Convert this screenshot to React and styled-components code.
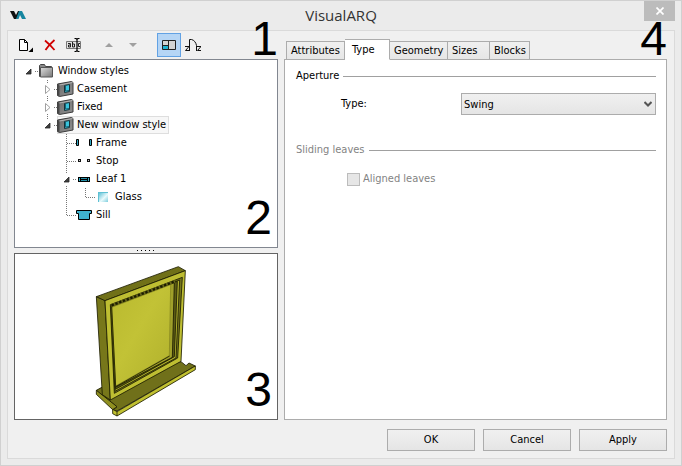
import React, { useState } from "react";
import styled, { createGlobalStyle, css } from "styled-components";

const GlobalStyle = createGlobalStyle`
  * { box-sizing: border-box; }
  body { margin: 0; }
  body, button, select, input {
    font-family: "DejaVu Sans Condensed", "Noto Sans", sans-serif;
    font-size: 11px;
    line-height: 16px;
    color: #000;
  }
`;

const Window = styled.div`
  display: flex;
  flex-direction: column;
  min-height: 100vh;
  padding: 0 6px 6px;
  border: 1px solid #d0d0d0;
  background: #ebebeb;
`;

const TitleBar = styled.header`
  display: grid;
  grid-template-columns: 32px 1fr 32px;
  height: 29px;
`;

const Logo = styled.svg`
  width: 16px;
  height: 8px;
  margin: 10px 0 0 3px;
`;

const Title = styled.h1`
  margin: 0;
  font-family: "Open Sans", sans-serif;
  font-size: 15px;
  font-weight: 400;
  line-height: 29px;
  text-align: center;
  color: #333;
`;

const CloseButton = styled.button`
  display: grid;
  place-items: center;
  width: 31px;
  height: 20px;
  margin-left: 1px;
  padding: 0;
  border: 0;
  background: #bcbcbc;
`;

const Client = styled.main`
  flex: 1;
  display: flex;
  flex-direction: column;
  padding: 0 7px 7px 6px;
  border: 1px solid #dadada;
  background: #f0f0f0;
`;

const Columns = styled.div`
  flex: 1;
  display: grid;
  grid-template-columns: 264px minmax(0, 1fr);
  gap: 6px;
`;

const Column = styled.section`
  position: relative;
  display: flex;
  flex-direction: column;
`;

const Toolbar = styled.div`
  display: flex;
  align-items: center;
  height: 28px;
`;

const ToolButton = styled.button`
  display: grid;
  place-items: center;
  width: 24px;
  height: 24px;
  padding: 0;
  border: 1px solid ${(p) => (p.$pressed ? "#62a2e4" : "transparent")};
  background: ${(p) => (p.$pressed ? "#b5d5f5" : "transparent")};
`;

const ToolGap = styled.span`
  width: ${(p) => p.$size}px;
`;

const Tree = styled.ul`
  position: relative;
  height: 189px;
  margin: 0;
  padding: 2px 4px;
  border: 1px solid #828790;
  background: #fff;
  list-style: none;
`;

const TreeRow = styled.li`
  display: flex;
  align-items: center;
  height: 18px;
`;

const Guide = styled.svg`
  flex: none;
  width: 19px;
  height: 18px;
`;

const ItemIcon = styled.svg`
  flex: none;
  width: 16px;
  height: 16px;
  overflow: visible;
`;

const ItemLabel = styled.span`
  height: 18px;
  margin-left: 1px;
  padding: 0 3px;
  line-height: 18px;
  white-space: nowrap;
`;

const Item = styled.span`
  display: flex;
  align-items: center;
  height: 18px;
  ${(p) =>
    p.$selected &&
    css`
      background: #f7f7f7;
      box-shadow: inset 0 0 0 1px #dedede;
    `}
`;

const Splitter = styled.div`
  display: flex;
  justify-content: center;
  height: 5px;
  padding-top: 2px;
`;

const Preview = styled.div`
  position: relative;
  flex: 1;
  padding-left: 70px;
  border: 1px solid #646464;
  background: #fff;
`;

const Model = styled.svg`
  display: block;
  width: 120px;
  height: 165px;
`;

const Callout = styled.span`
  position: absolute;
  font-family: "Liberation Sans", Arial, sans-serif;
  font-size: 48px;
  line-height: 34px;
  pointer-events: none;
  ${(p) => (p.$low ? "bottom: 12px; right: 5px;" : "top: -9px; right: 0;")}
`;

const Tabs = styled.div`
  display: flex;
  align-items: flex-end;
  height: 28px;
  padding-left: 2px;
`;

const Tab = styled.button`
  width: ${(p) => p.$width}px;
  height: 19px;
  margin-bottom: -1px;
  padding: 0 0 0 4px;
  border: 1px solid #acacac;
  border-left-width: ${(p) => (p.$first ? 1 : 0)}px;
  background: linear-gradient(#f0f0f0, #e6e6e6);
  line-height: 18px;
  text-align: left;
  ${(p) =>
    p.$active &&
    css`
      z-index: 1;
      height: 21px;
      padding: 0 0 0 7px;
      border-bottom-color: #fff;
      background: #fff;
    `}
`;

const TabPanel = styled.div`
  flex: 1;
  padding: 8px 10px 8px 11px;
  border: 1px solid #acacac;
  background: #fff;
`;

const Group = styled.fieldset`
  min-width: 0;
  margin: 0 0 27px;
  padding: 0;
  border: 0;
  color: ${(p) => (p.disabled ? "#838383" : "#000")};
`;

const Legend = styled.legend`
  display: flex;
  align-items: center;
  gap: 4px;
  width: 100%;
  padding: 0;

  &::after {
    content: "";
    flex: 1;
    border-top: 1px solid #a0a0a0;
  }
`;

const Field = styled.div`
  display: grid;
  grid-template-columns: 120px minmax(0, 1fr);
  align-items: center;
  margin: 9px 0 0 45px;
`;

const SelectBox = styled.div`
  display: grid;
  align-items: center;

  & > * { grid-area: 1 / 1; }
  & > svg { justify-self: end; margin-right: 4px; pointer-events: none; }
`;

const Select = styled.select`
  appearance: none;
  width: 100%;
  height: 22px;
  padding: 2px 16px 0 2px;
  border: 1px solid #acacac;
  border-radius: 0;
  background: linear-gradient(#f0f0f0, #e5e5e5);
`;

const CheckLabel = styled.label`
  display: flex;
  align-items: center;
  gap: 3px;
  margin: 13px 0 0 51px;
`;

const CheckBox = styled.input`
  appearance: none;
  width: 13px;
  height: 13px;
  margin: 0;
  border: 1px solid #bcbcbc;
  background: #e6e6e6;
  &:checked { background: #999; }
`;

const Footer = styled.footer`
  display: flex;
  justify-content: flex-end;
  gap: 8px;
  padding-top: 9px;
`;

const PushButton = styled.button`
  width: 88px;
  height: 22px;
  padding: 0;
  border: 1px solid #acacac;
  background: linear-gradient(#f0f0f0, #e5e5e5);
`;

function NewIcon() {
  return (
    <svg width="16" height="16" viewBox="0 0 16 16" aria-hidden="true">
      <path d="M1.500 2.500h5l3 3v8h-8z" fill="#fff" stroke="#000" />
      <path d="M6.500 2.500v3h3" fill="none" stroke="#000" />
      <path d="M15 10.500v4.500h-4.500z" />
    </svg>
  );
}

function DeleteIcon() {
  return (
    <svg width="12" height="12" viewBox="0 0 12 12" aria-hidden="true">
      <path d="M1 1.500C4 4 8 8 10.500 11M10.500 1C7 4 4 7 1.500 11" fill="none" stroke="#d00000" strokeWidth="1.800" />
    </svg>
  );
}

function RenameIcon() {
  return (
    <svg width="16" height="16" viewBox="0 0 16 16" aria-hidden="true">
      <path d="M.5 4.500h14v7H.5z" fill="#e4e4e4" stroke="#777" />
      <path d="M2 6.500h2.500v3.500h-2v-2h2M6.500 5v5h2v-3h-2M14 6.500h-1.500v3H14" fill="none" stroke="#222" />
      <path d="M8.500 1.500h1.500l1 1 1-1h1.500M11 2v12M8.500 14.500h1.500l1-1 1 1h1.500" fill="none" stroke="#000" strokeWidth="1.200" />
    </svg>
  );
}

function TriangleIcon({ down }) {
  return (
    <svg width="8" height="4" viewBox="0 0 8 4" aria-hidden="true">
      <path d={down ? "M0 0h8L4 4z" : "M0 4h8L4 0z"} fill="#a0a0a0" />
    </svg>
  );
}

function PlanIcon() {
  return (
    <svg width="14" height="12" viewBox="0 0 14 12" aria-hidden="true">
      <path d="M.5 1.500h13v9H.5z" fill="#d4d4d4" />
      <path d="M1 6h6v4H1z" fill="#1fb4d4" />
      <path d="M.5 1.500h13v9H.5zM6.500 1v9M1 6.500h6" fill="none" stroke="#222" />
    </svg>
  );
}

function SectionIcon() {
  return (
    <svg width="16" height="14" viewBox="0 0 16 14" aria-hidden="true">
      <path d="M4.500 13V1.500h2C9 2 11 4.500 11.500 7.500V13M0 8.500h4L.5 12.500h4M12 8.500h4L12.500 12.500H16" fill="none" stroke="#111" />
    </svg>
  );
}

const shapes = {
  folder: (
    <>
      <path d="M1.500 13.500v-11l1-1h4l1 2h6v10z" fill="#888" stroke="#444" />
      <path d="M2.500 4.500h12v9.500h-12z" fill="url(#folder)" stroke="#555" />
    </>
  ),
  wall: (
    <>
      <path d="M.5 3L14.500.500l1.500 1v11.500L2.500 15.500l-2-1z" fill="url(#wall)" stroke="#3c3c3c" />
      <path d="M.5 3l2 1v11.500l-2-1z" fill="#484848" />
      <path d="M2.500 4l13-2.500" stroke="#b4b4b4" />
      <path d="M7.500 4.500l5-1v7l-5 1z" fill="#3bc4dc" stroke="#18333a" />
      <path d="M8.500 4.500v5.500l3.500-.5" fill="none" stroke="#176476" />
    </>
  ),
  frame: <path d="M.5 4.500h2v6h-2zM13.500 4.500h2v6h-2z" fill="#2fa9c4" stroke="#000" />,
  stop: (
    <>
      <path d="M2 6h3v3H2zM11 6h3v3h-3z" fill="#111" />
      <path d="M3 7h1v1H3zM12 7h1v1h-1z" fill="#ccc" />
    </>
  ),
  leaf: (
    <>
      <path d="M2 6h12v5H2z" fill="#000" />
      <path d="M3 7h1v3H3zM12 7h1v3h-1z" fill="#35b0ca" />
      <path d="M5 7.500h6M5 9.500h6" stroke="#2491a8" />
    </>
  ),
  glass: (
    <>
      <path d="M3 3h10v10H3z" fill="url(#glass)" />
      <path d="M3.500 13V3.500H13" fill="none" stroke="#5fc1d4" />
    </>
  ),
  sill: <path d="M.5 3.500h15v3h-2v6h-11v-6h-2z" fill="#3fb3cf" stroke="#000" />,
};

/* Guide cells: "open"/"closed" are expanders, "tee"/"end" join a leaf, "line" passes through. */
const rows = [
  { label: "Window styles", icon: "folder", guides: ["openRoot"] },
  { label: "Casement", icon: "wall", guides: ["", "closed"] },
  { label: "Fixed", icon: "wall", guides: ["", "closed"] },
  { label: "New window style", icon: "wall", guides: ["", "open"], selected: true },
  { label: "Frame", icon: "frame", guides: ["", "", "tee"] },
  { label: "Stop", icon: "stop", guides: ["", "", "tee"] },
  { label: "Leaf 1", icon: "leaf", guides: ["", "", "openMid"] },
  { label: "Glass", icon: "glass", guides: ["", "", "line", "end"] },
  { label: "Sill", icon: "sill", guides: ["", "", "end"] },
];

function GuideCell({ kind }) {
  const line = {
    openRoot: "M16 9.500h3",
    closed: "M9.500 0v3M9.500 16v2M16 9.500h3",
    open: "M9.500 0v3M16 9.500h3",
    openMid: "M9.500 0v3M9.500 16v2M16 9.500h3",
    tee: "M9.500 0v18M10 9.500h9",
    end: "M9.500 0v10M10 9.500h9",
    line: "M9.500 0v18",
  }[kind];
  return (
    <Guide viewBox="0 0 19 18" aria-hidden="true">
      {line && <path d={line} fill="none" stroke="#777" strokeDasharray="1 1" />}
      {kind.startsWith("open") && <path d="M12 7v5H7z" fill="#404040" stroke="#262626" strokeWidth=".8" />}
      {kind === "closed" && <path d="M7.500 5.500v8l4.500-4z" fill="#fff" stroke="#a0a0a0" />}
    </Guide>
  );
}

function WindowModel() {
  return (
    <Model viewBox="0 12 360 495" role="img" aria-label="Window preview">
      <defs>
        <linearGradient id="pane" x1="0" y1="0" x2="1" y2="1">
          <stop offset="0" stopColor="#b9b92e" />
          <stop offset=".45" stopColor="#c2c236" />
          <stop offset="1" stopColor="#b0b02c" />
        </linearGradient>
      </defs>
      <g stroke="#1c1c00" strokeWidth="2.500" strokeLinejoin="round">
        <path d="M34 421l22-12 232-74 15 12 9-8 19 9-235 135-13-4 13-8z" fill="#70701a" />
        <path d="M34 421v12l49 46 13-9z" fill="#8f8f20" />
        <path d="M83 478l13 7 235-137v11L96 498l-13-7z" fill="#c0c030" />
        <path d="M96 485v13" />
        <path d="M34 140l26 12 16 298-24-16z" fill="#77771a" />
        <path d="M34 140L280 50l21 12L60 152z" fill="#707018" />
        <path d="M60 152L301 62l-13 272L76 450z" fill="#bebe32" />
        <path d="M76 164L292 82l-14 242L88 430z" fill="#74741c" />
        <path d="M78 168L284 90l-11 234L90 424z" fill="#b0b02c" />
        <path d="M80 172L277 94l-9 226L91 418z" fill="#5a5a14" />
        <path d="M80 172L268 98l-6 224L91 412z" fill="#a0a02a" />
        <path d="M80 172L257 104l-4 213L92 408z" fill="url(#pane)" stroke="#8a8a20" />
        <path d="M80 170l12 240 162-92" fill="none" />
        <path d="M80 166L270 94" stroke="#66661a" strokeWidth="8" />
        <path d="M80 166L270 94" strokeWidth="7" strokeDasharray="7 5" />
      </g>
    </Model>
  );
}

const tabs = [
  { name: "Attributes", width: 59 },
  { name: "Type", width: 45 },
  { name: "Geometry", width: 58 },
  { name: "Sizes", width: 42 },
  { name: "Blocks", width: 40 },
];

export default function App() {
  const [active, setActive] = useState("Type");
  return (
    <Window>
      <GlobalStyle />
      <TitleBar>
        <Logo viewBox="0 0 16 8" aria-hidden="true">
          <path d="M0 0h4l2 4 2-4h2L7.500 8H4z" fill="#101010" />
          <path d="M9 0h3l4 8h-4l-2-4-1.500 4H6z" fill="#1686a0" />
        </Logo>
        <Title>VisualARQ</Title>
        <CloseButton aria-label="Close">
          <svg width="8" height="8" viewBox="0 0 8 8" aria-hidden="true">
            <path d="M.5.500l7 7M7.500.500l-7 7" stroke="#fff" strokeWidth="1.700" />
          </svg>
        </CloseButton>
      </TitleBar>
      <Client>
        <Columns>
          <Column>
            <Toolbar>
              <ToolButton aria-label="New"><NewIcon /></ToolButton>
              <ToolButton aria-label="Delete"><DeleteIcon /></ToolButton>
              <ToolButton aria-label="Rename"><RenameIcon /></ToolButton>
              <ToolGap $size={11} />
              <ToolButton aria-label="Move up"><TriangleIcon /></ToolButton>
              <ToolButton aria-label="Move down"><TriangleIcon down /></ToolButton>
              <ToolGap $size={12} />
              <ToolButton aria-label="Plan view" aria-pressed="true" $pressed><PlanIcon /></ToolButton>
              <ToolButton aria-label="Section view"><SectionIcon /></ToolButton>
            </Toolbar>
            <Callout>1</Callout>
            <Tree>
              {rows.map((row) => (
                <TreeRow key={row.label}>
                  {row.guides.map((kind, i) => <GuideCell key={i} kind={kind} />)}
                  <Item $selected={row.selected}>
                    <ItemIcon viewBox="0 0 16 16" aria-hidden="true">
                      <defs>
                        <linearGradient id="folder" x1="0" y1="0" x2="1" y2="1">
                          <stop offset="0" stopColor="#ddd" />
                          <stop offset="1" stopColor="#777" />
                        </linearGradient>
                        <linearGradient id="wall" x1="0" y1="0" x2="1" y2="1">
                          <stop offset="0" stopColor="#6c6c6c" />
                          <stop offset="1" stopColor="#909090" />
                        </linearGradient>
                        <linearGradient id="glass" x1="0" y1="0" x2="1" y2="1">
                          <stop offset="0" stopColor="#48b8d0" />
                          <stop offset=".6" stopColor="#e8fafc" />
                          <stop offset="1" stopColor="#7fcddd" />
                        </linearGradient>
                      </defs>
                      {shapes[row.icon]}
                    </ItemIcon>
                    <ItemLabel>{row.label}</ItemLabel>
                  </Item>
                </TreeRow>
              ))}
              <Callout as="li" $low>2</Callout>
            </Tree>
            <Splitter>
              <svg width="18" height="1" viewBox="0 0 18 1" aria-hidden="true">
                <path d="M0 .5h18" stroke="#000" strokeDasharray="1 3" />
              </svg>
            </Splitter>
            <Preview>
              <WindowModel />
              <Callout $low>3</Callout>
            </Preview>
          </Column>
          <Column>
            <Tabs role="tablist">
              {tabs.map((tab, i) => (
                <Tab
                  key={tab.name}
                  role="tab"
                  aria-selected={active === tab.name}
                  $active={active === tab.name}
                  $first={i === 0}
                  $width={tab.width}
                  onClick={() => setActive(tab.name)}
                >
                  {tab.name}
                </Tab>
              ))}
            </Tabs>
            <Callout>4</Callout>
            <TabPanel role="tabpanel">
              <Group>
                <Legend>Aperture</Legend>
                <Field>
                  <label htmlFor="type">Type:</label>
                  <SelectBox>
                    <Select id="type" defaultValue="Swing">
                      <option>Swing</option>
                    </Select>
                    <svg width="8" height="6" viewBox="0 0 8 6" aria-hidden="true">
                      <path d="M.5 1L4 4.500 7.500 1" fill="none" stroke="#555" strokeWidth="2" />
                    </svg>
                  </SelectBox>
                </Field>
              </Group>
              <Group disabled>
                <Legend>Sliding leaves</Legend>
                <CheckLabel>
                  <CheckBox type="checkbox" />
                  Aligned leaves
                </CheckLabel>
              </Group>
            </TabPanel>
          </Column>
        </Columns>
        <Footer>
          <PushButton>OK</PushButton>
          <PushButton>Cancel</PushButton>
          <PushButton>Apply</PushButton>
        </Footer>
      </Client>
    </Window>
  );
}
